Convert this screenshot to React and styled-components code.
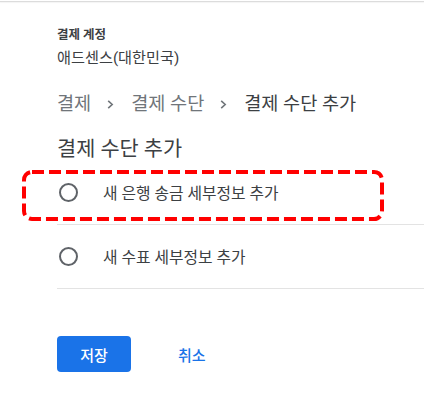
import styled, { createGlobalStyle } from 'styled-components';

const GlobalStyle = createGlobalStyle`
  body {
    margin: 0;
    background: #fff;
    font-family: Roboto, "Noto Sans CJK KR", sans-serif;
    color: #3c4043;
  }
`;

const TopBar = styled.div`
  margin-top: 1px;
  height: 1px;
  background-color: #dcdcdc;
  box-shadow: 0 1px 1px rgba(0, 0, 0, 0.05);
`;

const Page = styled.main`
  padding-left: 57px;
  overflow: hidden;
`;

const Account = styled.section`
  margin-top: 25px;
  display: flex;
  flex-direction: column;
`;

const AccountLabel = styled.span`
  font-size: 12.5px;
  font-weight: 700;
  line-height: 16px;
  color: #3c4043;
`;

const AccountName = styled.span`
  margin-top: 5px;
  font-size: 15.2px;
  line-height: 20px;
  color: #3c4043;
`;

const Breadcrumb = styled.nav`
  margin-top: 24px;
  display: flex;
  align-items: center;
  font-size: 18.6px;
  line-height: 24px;
`;

const Crumb = styled.span`
  color: ${(props) => (props.current ? '#3c4043' : '#70757a')};
  white-space: nowrap;
`;

const Chevron = styled.svg`
  width: 7px;
  height: 9px;
  margin: 0 17px 0 16px;
  flex-shrink: 0;
`;

const Title = styled.h1`
  margin: 21px 0 0;
  font-size: 20.8px;
  font-weight: 400;
  line-height: 24px;
  color: #3c4043;
`;

const OptionList = styled.ul`
  margin: 0;
  padding: 0;
  list-style: none;
`;

const Option = styled.li`
  position: relative;
  height: 63px;
  display: flex;
  align-items: center;
  border-bottom: 1px solid #e3e3e3;
`;

const Radio = styled.span`
  width: 15px;
  height: 15px;
  margin-left: 2px;
  border: 2px solid #5f6368;
  border-radius: 50%;
  flex-shrink: 0;
`;

const OptionText = styled.span`
  margin-left: 25px;
  font-size: 15.8px;
  color: #3c4043;
  white-space: nowrap;
`;

const Highlight = styled.svg`
  position: absolute;
  left: -35px;
  top: 9px;
  width: 362px;
  height: 51px;
  pointer-events: none;
`;

const Actions = styled.div`
  margin-top: 47px;
  display: flex;
  align-items: center;
`;

const SaveButton = styled.button`
  width: 74px;
  height: 36px;
  border: none;
  border-radius: 4px;
  background-color: #1a73e8;
  color: #fff;
  font-family: inherit;
  font-size: 15px;
  font-weight: 500;
  cursor: pointer;
`;

const CancelButton = styled.button`
  margin-left: 23px;
  padding: 0 24px;
  height: 36px;
  border: none;
  background: transparent;
  color: #1a73e8;
  font-family: inherit;
  font-size: 15px;
  font-weight: 500;
  cursor: pointer;
`;

const ChevronIcon = () => (
  <Chevron viewBox="0 0 7 9">
    <path d="M1.2 0.8 L5.2 4.5 L1.2 8.2" fill="none" stroke="#70757a" strokeWidth="1.6" />
  </Chevron>
);

const App = () => {
  return (
    <>
      <GlobalStyle />
      <TopBar />
      <Page>
        <Account>
          <AccountLabel>결제 계정</AccountLabel>
          <AccountName>애드센스(대한민국)</AccountName>
        </Account>
        <Breadcrumb>
          <Crumb>결제</Crumb>
          <ChevronIcon />
          <Crumb>결제 수단</Crumb>
          <ChevronIcon />
          <Crumb current>결제 수단 추가</Crumb>
        </Breadcrumb>
        <Title>결제 수단 추가</Title>
        <OptionList>
          <Option>
            <Radio />
            <OptionText>새 은행 송금 세부정보 추가</OptionText>
            <Highlight viewBox="0 0 362 51">
              <rect
                x="2"
                y="2"
                width="358"
                height="47"
                rx="8"
                fill="none"
                stroke="#ff0000"
                strokeWidth="4"
                strokeDasharray="12 5"
              />
            </Highlight>
          </Option>
          <Option>
            <Radio />
            <OptionText>새 수표 세부정보 추가</OptionText>
          </Option>
        </OptionList>
        <Actions>
          <SaveButton>저장</SaveButton>
          <CancelButton>취소</CancelButton>
        </Actions>
      </Page>
    </>
  );
};

export default App;
